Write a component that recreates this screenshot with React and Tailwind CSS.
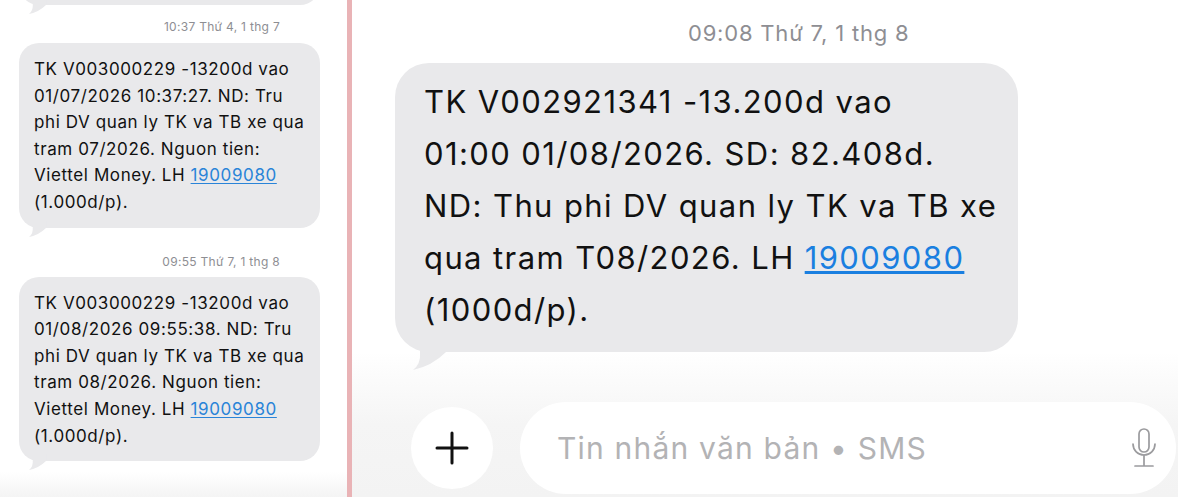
import React from "react";

const FONT = { fontFamily: "Inter, 'Liberation Sans', sans-serif" };

// Đuôi bong bóng tin nhắn (góc dưới bên trái)
function Tail({ className }) {
  return (
    <svg viewBox="0 0 40 32" className={className} aria-hidden="true">
      <path d="M12 0 L12 12 Q13 24 5 30 Q24 26 38 12 L38 0 Z" fill="#e9e9eb" />
    </svg>
  );
}

function SmallBubble({ lines }) {
  return (
    <div className="relative ml-[19px] w-[301px] rounded-[20px] bg-[#e9e9eb] pl-[15px] pt-[13px] pb-[12px] text-[17px] leading-[26.6px] tracking-[0.6px] text-[#111]">
      {lines.map((l, i) => (
        <div key={i} className="whitespace-nowrap">
          {l}
        </div>
      ))}
      <Tail className="absolute left-[7px] bottom-[-10px] w-[22px] h-[17px]" />
    </div>
  );
}

const link = (n, cls) => (
  <span className={`underline underline-offset-2 ${cls}`}>{n}</span>
);

export default function App() {
  const bubble1 = [
    "TK V003000229 -13200d vao",
    "01/07/2026 10:37:27. ND: Tru",
    "phi DV quan ly TK va TB xe qua",
    "tram 07/2026. Nguon tien:",
    <>Viettel Money. LH {link("19009080", "text-[#2a84d8]")}</>,
    "(1.000d/p).",
  ];
  const bubble2 = [
    "TK V003000229 -13200d vao",
    "01/08/2026 09:55:38. ND: Tru",
    "phi DV quan ly TK va TB xe qua",
    "tram 08/2026. Nguon tien:",
    <>Viettel Money. LH {link("19009080", "text-[#2a84d8]")}</>,
    "(1.000d/p).",
  ];
  const big = [
    "TK V002921341 -13.200d vao",
    "01:00 01/08/2026. SD: 82.408d.",
    "ND: Thu phi DV quan ly TK va TB xe",
    <>qua tram T08/2026. LH {link("19009080", "text-[#1a7fe0]")}</>,
    "(1000d/p).",
  ];

  return (
    <div style={FONT} className="flex w-[1178px] h-[497px] overflow-hidden bg-white">
      {/* Cột trái */}
      <div className="flex w-[347px] flex-col">
        <div className="relative -mt-[35px] ml-[19px] h-[40px] w-[301px] rounded-[20px] bg-[#e9e9eb]">
          <Tail className="absolute left-[7px] bottom-[-10px] w-[22px] h-[17px]" />
        </div>
        <div className="mt-[15px] pr-[67px] text-right text-[12px] leading-[14px] tracking-[0.3px] text-[#8e8e93]">
          10:37 Thứ 4, 1 thg 7
        </div>
        <div className="mt-[9px]">
          <SmallBubble lines={bubble1} />
        </div>
        <div className="mt-[27px] pr-[67px] text-right text-[12px] leading-[14px] tracking-[0.3px] text-[#8e8e93]">
          09:55 Thứ 7, 1 thg 8
        </div>
        <div className="mt-[8px]">
          <SmallBubble lines={bubble2} />
        </div>
        <div className="mt-auto h-[25px] bg-linear-to-b from-white to-[#f4f4f4]" />
      </div>

      {/* Vạch ngăn */}
      <div className="w-[5px] bg-[#e9b3b6]" />

      {/* Cột phải */}
      <div className="flex flex-1 flex-col">
        <div className="pt-[21px] pl-[336px] text-[22px] leading-[24px] tracking-[0.8px] text-[#8e8e93] whitespace-nowrap">
          09:08 Thứ 7, 1 thg 8
        </div>
        <div className="relative mt-[18px] ml-[43px] w-[623px] rounded-[34px] bg-[#e9e9eb] pl-[29px] pt-[13px] pb-[16px] text-[31px] leading-[52px] tracking-[1.4px] text-[#111]">
          {big.map((l, i) => (
            <div key={i} className="whitespace-nowrap">
              {l}
            </div>
          ))}
          <Tail className="absolute left-[13px] bottom-[-20px] w-[40px] h-[32px]" />
        </div>

        {/* Thanh soạn tin */}
        <div className="flex flex-1 items-start bg-linear-to-b from-white via-[#f5f5f5] to-[#f3f3f3] pt-[50px]">
          <div className="flex h-[92px] w-full items-center">
            <div className="ml-[59px] flex h-[82px] w-[82px] items-center justify-center rounded-full bg-white">
              <svg viewBox="0 0 34 34" className="h-[34px] w-[34px]">
                <path d="M17 2 V32 M2 17 H32" stroke="#111" strokeWidth="3" strokeLinecap="round" />
              </svg>
            </div>
            <div className="ml-[27px] mr-[2px] flex h-[92px] flex-1 items-center rounded-full bg-white pl-[37px] pr-[20px]">
              <span className="flex-1 whitespace-nowrap text-[30px] tracking-[1.2px] text-[#b3b3b5]">
                Tin nhắn văn bản • SMS
              </span>
              <svg viewBox="0 0 24 40" className="h-[40px] w-[24px]" fill="none" stroke="#9b9b9e" strokeWidth="1.7" strokeLinecap="round">
                <rect x="7" y="1" width="10" height="23" rx="5" />
                <path d="M1 16 a11 11 0 0 0 22 0" />
                <path d="M12 27 V38 M3 38 H21" />
              </svg>
            </div>
          </div>
        </div>
      </div>
    </div>
  );
}
